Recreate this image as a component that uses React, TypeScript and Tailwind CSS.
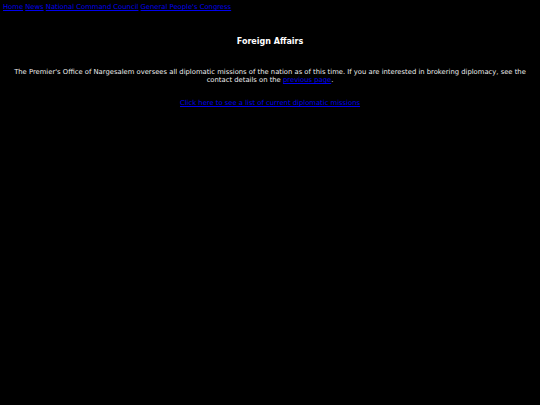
export default function App() {
  return (
    <div className="min-h-[405px] bg-black text-[6.8px] leading-[8px] text-[#eeeeee] [font-family:'DejaVu_Sans',Verdana,sans-serif]">
      <div className="px-[3px] pt-[3px]">
        <a href="#" className="text-[#0000ee] underline">Home</a>{' '}
        <a href="#" className="text-[#0000ee] underline">News</a>{' '}
        <a href="#" className="text-[#0000ee] underline">National Command Council</a>{' '}
        <a href="#" className="text-[#0000ee] underline">General People's Congress</a>
      </div>
      <h1 className="mt-[26px] text-center text-[8px] font-bold leading-[10px] text-white">Foreign Affairs</h1>
      <p className="mt-[21px] px-[10px] text-center">
        The Premier's Office of Nargesalem oversees all diplomatic missions of the nation as of this time. If you are interested in brokering diplomacy, see the contact details on the{' '}
        <a href="#" className="text-[#0000ee] underline">previous page</a>.
      </p>
      <p className="mt-[15px] text-center">
        <a href="#" className="text-[#0000ee] underline">Click here to see a list of current diplomatic missions</a>
      </p>
    </div>
  );
}
